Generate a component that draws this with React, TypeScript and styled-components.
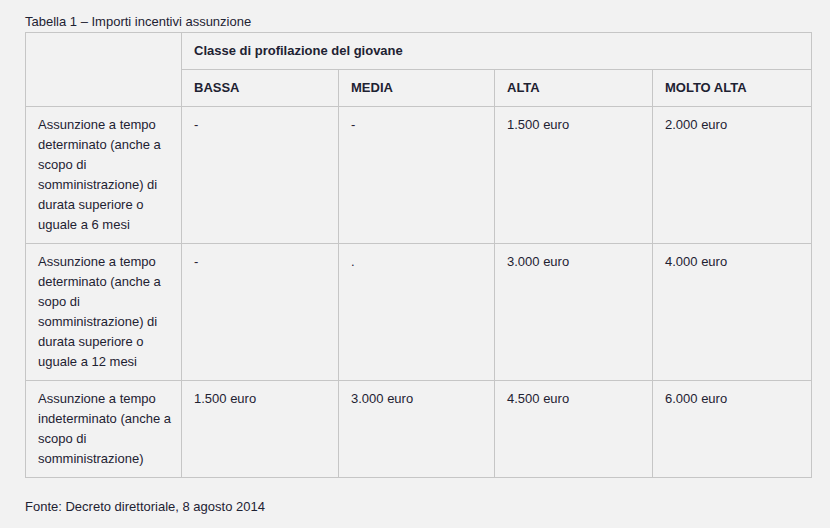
import React from "react";
import styled, { createGlobalStyle } from "styled-components";

const GlobalStyle = createGlobalStyle`
  body {
    margin: 0;
    background: #f2f2f2;
    font-family: "Liberation Sans", Arial, sans-serif;
    color: #1e2232;
  }
`;

const Page = styled.div`
  padding: 12px 25px 0 25px;
  font-size: 13px;
  line-height: 20px;
`;

const Table = styled.table`
  width: 786px;
  border-collapse: collapse;
  table-layout: fixed;
  caption {
    caption-side: top;
    text-align: left;
  }
`;

const Cell = styled.td<{ $bold?: boolean; $label?: boolean }>`
  border: 1px solid #c6c6c6;
  padding: ${(p) => (p.$label ? "8px 6px 8px 12px" : "8px 12px")};
  vertical-align: top;
  text-align: left;
  font-weight: ${(p) => (p.$bold ? 700 : 400)};
`;

const Source = styled.p`
  margin: 19px 0 0 0;
`;

type Row = {
  label: string;
  values: string[];
};

const columns = ["BASSA", "MEDIA", "ALTA", "MOLTO ALTA"];
const widths = [156, 157, 156, 158, 159];

const rows: Row[] = [
  {
    label:
      "Assunzione a tempo determinato (anche a scopo di somministrazione) di durata superiore o uguale a 6 mesi",
    values: ["-", "-", "1.500 euro", "2.000 euro"],
  },
  {
    label:
      "Assunzione a tempo determinato (anche a sopo di somministrazione) di durata superiore o uguale a 12 mesi",
    values: ["-", ".", "3.000 euro", "4.000 euro"],
  },
  {
    label: "Assunzione a tempo indeterminato (anche a scopo di somministrazione)",
    values: ["1.500 euro", "3.000 euro", "4.500 euro", "6.000 euro"],
  },
];

export default function App() {
  return (
    <Page>
      <GlobalStyle />
      <Table>
        <caption>Tabella 1 – Importi incentivi assunzione</caption>
        <colgroup>
          {widths.map((w, i) => (
            <col key={i} style={{ width: w }} />
          ))}
        </colgroup>
        <thead>
          <tr>
            <Cell rowSpan={2} />
            <Cell as="th" colSpan={4} $bold>
              Classe di profilazione del giovane
            </Cell>
          </tr>
          <tr>
            {columns.map((c) => (
              <Cell as="th" key={c} $bold>
                {c}
              </Cell>
            ))}
          </tr>
        </thead>
        <tbody>
          {rows.map((r, i) => (
            <tr key={i}>
              <Cell $label>{r.label}</Cell>
              {r.values.map((v, j) => (
                <Cell key={j}>{v}</Cell>
              ))}
            </tr>
          ))}
        </tbody>
      </Table>
      <Source>Fonte: Decreto direttoriale, 8 agosto 2014</Source>
    </Page>
  );
}
